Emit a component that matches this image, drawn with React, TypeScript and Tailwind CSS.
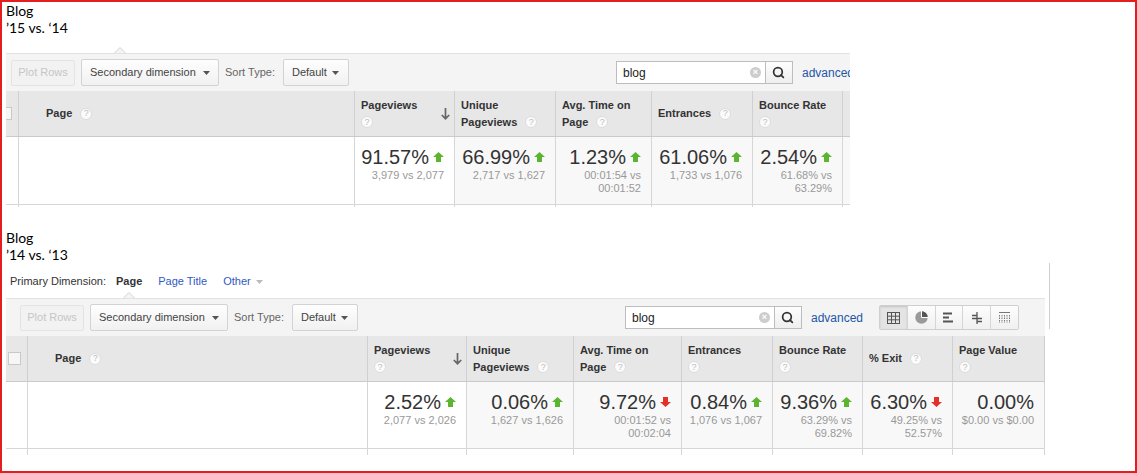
import { Search } from "lucide-react";

/**
 * Two cropped GA "Pages" report screenshots, stacked with year labels.
 */

type Trend = "up" | "down";

interface Column {
  w: string;
  label: string[];
  sort?: boolean;
  value?: string;
  trend?: Trend;
  sub?: string[];
}

const TOP_COLUMNS: Column[] = [
  { w: "w-[100px]", label: ["Pageviews", ""], sort: true, value: "91.57%", trend: "up", sub: ["3,979 vs 2,077"] },
  { w: "w-[101px]", label: ["Unique", "Pageviews"], value: "66.99%", trend: "up", sub: ["2,717 vs 1,627"] },
  { w: "w-[96px]", label: ["Avg. Time on", "Page"], value: "1.23%", trend: "up", sub: ["00:01:54 vs", "00:01:52"] },
  { w: "w-[101px]", label: ["Entrances"], value: "61.06%", trend: "up", sub: ["1,733 vs 1,076"] },
  { w: "w-[90px]", label: ["Bounce Rate", ""], value: "2.54%", trend: "up", sub: ["61.68% vs", "63.29%"] },
  // cropped column, only its left edge shows
  { w: "w-[90px]", label: [] },
];

const BOTTOM_COLUMNS: Column[] = [
  { w: "w-[99px]", label: ["Pageviews", ""], sort: true, value: "2.52%", trend: "up", sub: ["2,077 vs 2,026"] },
  { w: "w-[107px]", label: ["Unique", "Pageviews"], value: "0.06%", trend: "up", sub: ["1,627 vs 1,626"] },
  { w: "w-[108px]", label: ["Avg. Time on", "Page"], value: "9.72%", trend: "down", sub: ["00:01:52 vs", "00:02:04"] },
  { w: "w-[91px]", label: ["Entrances", ""], value: "0.84%", trend: "up", sub: ["1,076 vs 1,067"] },
  { w: "w-[90px]", label: ["Bounce Rate", ""], value: "9.36%", trend: "up", sub: ["63.29% vs", "69.82%"] },
  { w: "w-[90px]", label: ["% Exit"], value: "6.30%", trend: "down", sub: ["49.25% vs", "52.57%"] },
  { w: "w-[92px]", label: ["Page Value", ""], value: "0.00%", sub: ["$0.00 vs $0.00"] },
];

function Help() {
  return (
    <span className="inline-flex w-[12px] h-[12px] shrink-0 rounded-full bg-[#fbfbfb] border border-[#dcdcdc] items-center justify-center text-[9px] font-normal leading-none text-[#bdbdbd]">
      ?
    </span>
  );
}

function Caret({ color = "#555" }: { color?: string }) {
  return (
    <svg width="7" height="4" viewBox="0 0 7 4">
      <path d="M0 0H7L3.5 4Z" fill={color} />
    </svg>
  );
}

function TrendIcon({ dir }: { dir: Trend }) {
  if (dir === "up") {
    return (
      <svg width="11" height="10" viewBox="0 0 11 10">
        <path d="M5.5 0L11 5H8V10H3V5H0Z" fill="#5cb531" />
      </svg>
    );
  }
  return (
    <svg width="11" height="10" viewBox="0 0 11 10">
      <path d="M3 0H8V5H11L5.5 10L0 5H3Z" fill="#e5302a" />
    </svg>
  );
}

function SortArrow() {
  return (
    <svg width="9" height="12" viewBox="0 0 9 12">
      <path d="M4.5 0V10.5M0.8 7L4.5 10.7L8.2 7" fill="none" stroke="#666" strokeWidth="1.7" />
    </svg>
  );
}

// View toggle icons (table / pie / performance / comparison / pivot)
function ViewIcon({ kind }: { kind: number }) {
  if (kind === 0)
    return (
      <svg width="13" height="12" viewBox="0 0 13 12">
        <rect x="0.5" y="0.5" width="12" height="11" fill="none" stroke="#555" />
        <path d="M4.5 0V12M8.5 0V12M0 4.2H13M0 7.8H13" stroke="#555" />
      </svg>
    );
  if (kind === 1)
    return (
      <svg width="13" height="13" viewBox="0 0 13 13">
        <circle cx="6.5" cy="6.5" r="6.2" fill="#9a9a9a" />
        <path d="M6.5 6.5V0.3A6.2 6.2 0 0 1 12.7 6.5Z" fill="#555" />
        <path d="M6.5 0V6.5H13" fill="none" stroke="#fff" strokeWidth="1" />
      </svg>
    );
  if (kind === 2)
    return (
      <svg width="11" height="11" viewBox="0 0 11 11">
        <rect x="0" y="0.5" width="9" height="2" fill="#555" />
        <rect x="0" y="4.5" width="6" height="2" fill="#555" />
        <rect x="0" y="8.5" width="10" height="2" fill="#555" />
      </svg>
    );
  if (kind === 3)
    return (
      <svg width="12" height="12" viewBox="0 0 12 12">
        <path d="M6 0V12M1 3.5H6M1 6.5H11M6 9.5H11" fill="none" stroke="#555" strokeWidth="1.3" />
      </svg>
    );
  return (
    <svg width="13" height="11" viewBox="0 0 13 11">
      <path d="M1 0.5H12" stroke="#777" strokeWidth="1" />
      <path d="M1.5 3V11M4 3V11M6.5 3V11M9 3V11M11.5 3V11" stroke="#777" strokeWidth="1" strokeDasharray="1.5 1" />
    </svg>
  );
}

function Title({ first, second }: { first: string; second: string }) {
  return (
    <div className="font-['Lato',sans-serif] text-[14px] leading-[17px] text-black">
      <div>{first}</div>
      <div>{second}</div>
    </div>
  );
}

function Toolbar() {
  return (
    <div className="h-[38px] bg-[#f4f4f4] border-t border-[#e2e2e2] flex items-center pl-[14px] pr-[26px]">
      <div className="w-[64px] h-[26px] shrink-0 border border-[#e3e3e3] rounded-[2px] bg-[#f2f2f2] flex items-center justify-center text-[11px] text-[#c6c6c6]">
        Plot Rows
      </div>
      <div className="ml-[6px] w-[138px] h-[27px] shrink-0 border border-[#d3d3d3] rounded-[2px] bg-gradient-to-b from-[#fefefe] to-[#f1f1f1] flex items-center justify-between pl-[8px] pr-[8px] text-[11px] text-[#444]">
        <span>Secondary dimension</span>
        <Caret />
      </div>
      <span className="ml-[6px] text-[11px] text-[#666] whitespace-nowrap">Sort Type:</span>
      <div className="ml-[8px] w-[66px] h-[27px] shrink-0 border border-[#d3d3d3] rounded-[2px] bg-gradient-to-b from-[#fefefe] to-[#f1f1f1] flex items-center justify-between pl-[8px] pr-[9px] text-[11px] text-[#444]">
        <span>Default</span>
        <Caret />
      </div>

      <div className="ml-auto flex items-center">
        <div className="w-[150px] h-[23px] border border-[#bdbdbd] bg-white flex items-center justify-between pl-[6px] pr-[4px] text-[12px] text-[#222]">
          <span>blog</span>
          <span className="w-[11px] h-[11px] rounded-full bg-[#cdcdcd] flex items-center justify-center text-[9px] leading-none text-white font-bold">
            ×
          </span>
        </div>
        <div className="w-[27px] h-[23px] border border-l-0 border-[#bdbdbd] bg-gradient-to-b from-[#fdfdfd] to-[#efefef] flex items-center justify-center">
          <Search size={13} strokeWidth={3.2} color="#333" />
        </div>
        <span className="ml-[9px] text-[12px] text-[#2356a8] whitespace-nowrap">advanced</span>
        <div className="ml-[16px] flex w-[140px] h-[25px] border border-[#cfcfcf] rounded-[2px] overflow-hidden">
          {[0, 1, 2, 3, 4].map((k) => (
            <div
              key={k}
              className={`flex-1 flex items-center justify-center ${k > 0 ? "border-l border-[#d5d5d5]" : ""} ${
                k === 0 ? "bg-[#e4e4e4] shadow-[inset_0_1px_2px_rgba(0,0,0,0.15)]" : "bg-gradient-to-b from-[#fdfdfd] to-[#f0f0f0]"
              }`}
            >
              <ViewIcon kind={k} />
            </div>
          ))}
        </div>
      </div>
    </div>
  );
}

interface PanelProps {
  cols: Column[];
  pageW: string;
  dataH: string;
  stripH: string;
  primary?: boolean;
}

function Panel({ cols, pageW, dataH, stripH, primary }: PanelProps) {
  return (
    <div className="w-[1039px] shrink-0">
      {/* Primary dimension selector */}
      {primary ? (
        <div className="h-[29px] pt-[12px] pl-[4px] flex items-start text-[11px] leading-[13px] text-[#333] whitespace-nowrap">
          <span>Primary Dimension:</span>
          <span className="ml-[10px] font-bold">Page</span>
          <span className="ml-[16px] text-[#3158c4]">Page Title</span>
          <span className="ml-[16px] text-[#3158c4]">Other</span>
          <span className="ml-[5px] mt-[5px] flex">
            <Caret color="#bbb" />
          </span>
        </div>
      ) : null}
      <div className="h-[6px] pl-[117px] flex items-end">
        <svg width="12" height="6" viewBox="0 0 12 6">
          <path d="M0 6.5L6 0.5L12 6.5" fill="#f4f4f4" stroke="#d4d4d4" />
        </svg>
      </div>

      <Toolbar />

      {/* Header row */}
      <div className="flex h-[46px] bg-[#e7e7e7] border-b border-[#cacaca]">
        <div className="w-[22px] shrink-0 border-r border-[#d0d0d0] flex items-center">
          <span className="ml-[2px] w-[13px] h-[13px] border border-[#c9c9c9] bg-[#f6f6f6]" />
        </div>
        <div className={`${pageW} shrink-0 border-r border-[#d0d0d0] flex items-center pl-[27px] text-[11px] font-bold text-[#333]`}>
          Page
          <span className="ml-[8px] flex">
            <Help />
          </span>
        </div>
        {cols.map((c, ci) => (
          <div key={ci} className={`${c.w} shrink-0 border-r border-[#d0d0d0] flex items-center justify-between pl-[6px] pr-[4px]`}>
            <div className="text-[11px] font-bold leading-[17px] text-[#333]">
              {c.label.map((line, i) => (
                <div key={i} className="flex items-center whitespace-nowrap h-[17px]">
                  {line}
                  {i === c.label.length - 1 ? (
                    line ? (
                      <span className="ml-[8px] flex">
                        <Help />
                      </span>
                    ) : (
                      <Help />
                    )
                  ) : null}
                </div>
              ))}
            </div>
            {c.sort ? <SortArrow /> : null}
          </div>
        ))}
      </div>

      {/* Data row */}
      <div className={`flex ${dataH} border-b border-[#d6d6d6]`}>
        <div className="w-[22px] shrink-0 border-r border-[#d6d6d6] bg-white" />
        <div className={`${pageW} shrink-0 border-r border-[#d6d6d6] bg-white`} />
        {cols.map((c, ci) => (
          <div
            key={ci}
            className={`${c.w} shrink-0 border-r border-[#d6d6d6] ${c.sort ? "bg-white" : "bg-[#f8f8f8]"} flex flex-col items-end pt-[8px] pr-[10px]`}
          >
            {c.value ? (
              <div className="flex items-center">
                <span className="text-[20px] leading-[24px] text-[#333]">{c.value}</span>
                {c.trend ? (
                  <span className="ml-[4px] flex">
                    <TrendIcon dir={c.trend} />
                  </span>
                ) : null}
              </div>
            ) : null}
            {c.sub?.map((s, i) => (
              <div key={i} className="text-[11px] leading-[13px] text-[#999] whitespace-nowrap">
                {s}
              </div>
            ))}
          </div>
        ))}
      </div>

      {/* Start of the next row (cropped) */}
      <div className={`flex ${stripH}`}>
        <div className="w-[22px] shrink-0 border-r border-[#d6d6d6]" />
        <div className={`${pageW} shrink-0 border-r border-[#d6d6d6]`} />
        {cols.map((c, ci) => (
          <div key={ci} className={`${c.w} shrink-0 border-r border-[#d6d6d6]`} />
        ))}
      </div>
    </div>
  );
}

export default function App() {
  return (
    <div className="w-[1137px] h-[473px] border-2 border-[#e41e1e] bg-white pl-[4px] font-['Liberation_Sans',Arial,Helvetica,sans-serif] overflow-hidden">
      <Title first="Blog" second="’15 vs. ‘14" />

      <div className="mt-[11px] w-[844px] overflow-hidden">
        <div className="ml-[-9px]">
          <Panel cols={TOP_COLUMNS} pageW="w-[336px]" dataH="h-[68px]" stripH="h-[2px]" />
        </div>
      </div>

      <div className="mt-[22px]">
        <Title first="Blog" second="’14 vs. ‘13" />
      </div>

      <div className="flex items-start">
        <Panel cols={BOTTOM_COLUMNS} pageW="w-[340px]" dataH="h-[67px]" stripH="h-[6px]" primary />
        <div className="ml-[4px] w-px h-[66px] bg-[#cfcfcf]" />
      </div>
    </div>
  );
}
